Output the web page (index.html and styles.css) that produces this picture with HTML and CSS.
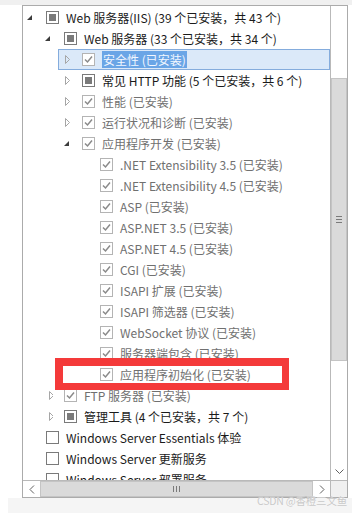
FILE: index.html
```html
<!DOCTYPE html>
<html>
<head>
<meta charset="utf-8">
<title>角色服务</title>
<link rel="stylesheet" href="styles.css">
</head>
<body>
<div class="topstrip"></div>
<div class="wrap">
  <div class="frame">
    <div class="tree">
      <div class="row l0"><span class="tw"><svg width="10" height="10"><polygon class="exp" points="7,2 7,7 2,7"/></svg></span><span class="cb"><svg width="13" height="13"><rect class="box" x="0.5" y="0.5" width="12" height="12"/><rect class="fill" x="3" y="3" width="7" height="7"/></svg></span><span class="tx">Web 服务器(IIS) (39 个已安装，共 43 个)</span></div>
      <div class="row l1"><span class="tw"><svg width="10" height="10"><polygon class="exp" points="7,2 7,7 2,7"/></svg></span><span class="cb"><svg width="13" height="13"><rect class="box" x="0.5" y="0.5" width="12" height="12"/><rect class="fill" x="3" y="3" width="7" height="7"/></svg></span><span class="tx">Web 服务器 (33 个已安装，共 34 个)</span></div>
      <div class="row l2 sel"><span class="tw"><svg width="10" height="10"><polygon class="col" points="4.5,0.5 8.5,4.5 4.5,8.5"/></svg></span><span class="cb off"><svg width="13" height="13"><rect class="box" x="0.5" y="0.5" width="12" height="12"/><path class="tick" d="M3 6.5 L5.5 9 L10 3.5"/></svg></span><span class="tx"><span class="hl">安全性 (已安装)</span></span></div>
      <div class="row l2"><span class="tw"><svg width="10" height="10"><polygon class="col" points="4.5,0.5 8.5,4.5 4.5,8.5"/></svg></span><span class="cb"><svg width="13" height="13"><rect class="box" x="0.5" y="0.5" width="12" height="12"/><rect class="fill" x="3" y="3" width="7" height="7"/></svg></span><span class="tx">常见 HTTP 功能 (5 个已安装，共 6 个)</span></div>
      <div class="row l2 dim"><span class="tw"><svg width="10" height="10"><polygon class="col" points="4.5,0.5 8.5,4.5 4.5,8.5"/></svg></span><span class="cb off"><svg width="13" height="13"><rect class="box" x="0.5" y="0.5" width="12" height="12"/><path class="tick" d="M3 6.5 L5.5 9 L10 3.5"/></svg></span><span class="tx">性能 (已安装)</span></div>
      <div class="row l2 dim"><span class="tw"><svg width="10" height="10"><polygon class="col" points="4.5,0.5 8.5,4.5 4.5,8.5"/></svg></span><span class="cb off"><svg width="13" height="13"><rect class="box" x="0.5" y="0.5" width="12" height="12"/><path class="tick" d="M3 6.5 L5.5 9 L10 3.5"/></svg></span><span class="tx">运行状况和诊断 (已安装)</span></div>
      <div class="row l2 dim"><span class="tw"><svg width="10" height="10"><polygon class="exp" points="8,2 8,7 3,7"/></svg></span><span class="cb off"><svg width="13" height="13"><rect class="box" x="0.5" y="0.5" width="12" height="12"/><path class="tick" d="M3 6.5 L5.5 9 L10 3.5"/></svg></span><span class="tx">应用程序开发 (已安装)</span></div>
      <div class="row l3 dim"><span class="tw"></span><span class="cb off"><svg width="13" height="13"><rect class="box" x="0.5" y="0.5" width="12" height="12"/><path class="tick" d="M3 6.5 L5.5 9 L10 3.5"/></svg></span><span class="tx">.NET Extensibility 3.5 (已安装)</span></div>
      <div class="row l3 dim"><span class="tw"></span><span class="cb off"><svg width="13" height="13"><rect class="box" x="0.5" y="0.5" width="12" height="12"/><path class="tick" d="M3 6.5 L5.5 9 L10 3.5"/></svg></span><span class="tx">.NET Extensibility 4.5 (已安装)</span></div>
      <div class="row l3 dim"><span class="tw"></span><span class="cb off"><svg width="13" height="13"><rect class="box" x="0.5" y="0.5" width="12" height="12"/><path class="tick" d="M3 6.5 L5.5 9 L10 3.5"/></svg></span><span class="tx">ASP (已安装)</span></div>
      <div class="row l3 dim"><span class="tw"></span><span class="cb off"><svg width="13" height="13"><rect class="box" x="0.5" y="0.5" width="12" height="12"/><path class="tick" d="M3 6.5 L5.5 9 L10 3.5"/></svg></span><span class="tx">ASP.NET 3.5 (已安装)</span></div>
      <div class="row l3 dim"><span class="tw"></span><span class="cb off"><svg width="13" height="13"><rect class="box" x="0.5" y="0.5" width="12" height="12"/><path class="tick" d="M3 6.5 L5.5 9 L10 3.5"/></svg></span><span class="tx">ASP.NET 4.5 (已安装)</span></div>
      <div class="row l3 dim"><span class="tw"></span><span class="cb off"><svg width="13" height="13"><rect class="box" x="0.5" y="0.5" width="12" height="12"/><path class="tick" d="M3 6.5 L5.5 9 L10 3.5"/></svg></span><span class="tx">CGI (已安装)</span></div>
      <div class="row l3 dim"><span class="tw"></span><span class="cb off"><svg width="13" height="13"><rect class="box" x="0.5" y="0.5" width="12" height="12"/><path class="tick" d="M3 6.5 L5.5 9 L10 3.5"/></svg></span><span class="tx">ISAPI 扩展 (已安装)</span></div>
      <div class="row l3 dim"><span class="tw"></span><span class="cb off"><svg width="13" height="13"><rect class="box" x="0.5" y="0.5" width="12" height="12"/><path class="tick" d="M3 6.5 L5.5 9 L10 3.5"/></svg></span><span class="tx">ISAPI 筛选器 (已安装)</span></div>
      <div class="row l3 dim"><span class="tw"></span><span class="cb off"><svg width="13" height="13"><rect class="box" x="0.5" y="0.5" width="12" height="12"/><path class="tick" d="M3 6.5 L5.5 9 L10 3.5"/></svg></span><span class="tx">WebSocket 协议 (已安装)</span></div>
      <div class="row l3 dim"><span class="tw"></span><span class="cb off"><svg width="13" height="13"><rect class="box" x="0.5" y="0.5" width="12" height="12"/><path class="tick" d="M3 6.5 L5.5 9 L10 3.5"/></svg></span><span class="tx">服务器端包含 (已安装)</span></div>
      <div class="row l3 dim"><span class="tw"></span><span class="cb off"><svg width="13" height="13"><rect class="box" x="0.5" y="0.5" width="12" height="12"/><path class="tick" d="M3 6.5 L5.5 9 L10 3.5"/></svg></span><span class="tx">应用程序初始化 (已安装)</span></div>
      <div class="row l1 dim"><span class="tw"><svg width="10" height="10"><polygon class="col" points="6.5,0.5 10.5,4.5 6.5,8.5"/></svg></span><span class="cb off"><svg width="13" height="13"><rect class="box" x="0.5" y="0.5" width="12" height="12"/><path class="tick" d="M3 6.5 L5.5 9 L10 3.5"/></svg></span><span class="tx">FTP 服务器 (已安装)</span></div>
      <div class="row l1"><span class="tw"><svg width="10" height="10"><polygon class="col" points="6.5,0.5 10.5,4.5 6.5,8.5"/></svg></span><span class="cb"><svg width="13" height="13"><rect class="box" x="0.5" y="0.5" width="12" height="12"/><rect class="fill" x="3" y="3" width="7" height="7"/></svg></span><span class="tx">管理工具 (4 个已安装，共 7 个)</span></div>
      <div class="row l0"><span class="tw"></span><span class="cb"><svg width="13" height="13"><rect class="box" x="0.5" y="0.5" width="12" height="12"/></svg></span><span class="tx">Windows Server Essentials 体验</span></div>
      <div class="row l0"><span class="tw"></span><span class="cb"><svg width="13" height="13"><rect class="box" x="0.5" y="0.5" width="12" height="12"/></svg></span><span class="tx">Windows Server 更新服务</span></div>
      <div class="row l0"><span class="tw"></span><span class="cb"><svg width="13" height="13"><rect class="box" x="0.5" y="0.5" width="12" height="12"/></svg></span><span class="tx">Windows Server 部署服务</span></div>
    </div>
    <div class="vscroll">
      <div class="vtrack">
        <div class="vthumb"><span class="grip-h"></span></div>
      </div>
      <div class="arrow-btn"><svg width="9" height="6"><path d="M0.5 0.5 L4.5 4.5 L8.5 0.5"/></svg></div>
    </div>
    <div class="hscroll">
      <div class="arrow-btn"><svg width="6" height="9"><path d="M5 0.5 L1 4.5 L5 8.5"/></svg></div>
      <div class="hthumb"><span class="grip-v"></span></div>
      <div class="arrow-btn"><svg width="6" height="9"><path d="M1 0.5 L5 4.5 L1 8.5"/></svg></div>
    </div>
    <div class="corner"></div>
  </div>
</div>
<div class="bottomstrip"></div>
<div class="mark"></div>
<div class="watermark">CSDN @香橙三文鱼</div>
</body>
</html>
```
FILE: styles.css
```css
body {
  margin: 0;
  width: 352px;
  height: 513px;
  overflow: hidden;
  background: #fff;
  font-family: "Noto Sans CJK SC", "Noto Sans", sans-serif;
  font-size: 12px;
  position: relative;
}

.topstrip {
  height: 5px;
  background: #f0f0f0;
}

.wrap {
  padding-left: 22px;
}

.frame {
  width: 326px;
  height: 493px;
  box-sizing: border-box;
  border: 1px solid #ababab;
  display: grid;
  grid-template-columns: 1fr 17px;
  grid-template-rows: 1fr 17px;
  background: #fff;
}

.tree {
  overflow: hidden;
  padding-top: 1px;
}

.row {
  height: 21px;
  box-sizing: border-box;
  border: 1px solid transparent;
  display: flex;
  align-items: center;
  white-space: nowrap;
  color: #1a1a1a;
}
.l0 { margin-left: -1px; }
.l1 { margin-left: 17px; }
.l2 { margin-left: 35px; }
.l3 { margin-left: 53px; }

.row.sel {
  border-color: #84acdd;
  background: #dbe9f9;
}
.row.dim {
  color: #707070;
}

.tw {
  width: 23px;
  flex: none;
  display: flex;
  align-items: center;
  padding-left: 2px;
  box-sizing: border-box;
}
.tw svg { display: block; }
.exp { fill: #3c3c3c; }
.col { fill: none; stroke: #a6a6a6; }

.cb {
  width: 13px;
  height: 13px;
  flex: none;
  margin-right: 7px;
}
.cb svg { display: block; }
.box { fill: #fff; stroke: #7a7a7a; }
.fill { fill: #7a7a7a; }
.cb.off .box { stroke: #b4b4b4; }
.tick { fill: none; stroke: #8a8a8a; stroke-width: 1.5; }

.hl {
  background: #6aa5e6;
  color: #f2f7ff;
  padding: 0 1px;
}

.vscroll {
  border-left: 1px solid #b9b9b9;
  display: flex;
  flex-direction: column;
}
.vtrack {
  flex: 1;
  padding-top: 72px;
  padding-bottom: 102px;
  display: flex;
}
.vthumb {
  flex: 1;
  background: #dadada;
  border: 1px solid #c4c4c4;
  display: flex;
  align-items: center;
  justify-content: center;
}
.grip-h {
  width: 6px;
  height: 5px;
  border-top: 1px solid #7a7a7a;
  border-bottom: 1px solid #7a7a7a;
  background: linear-gradient(#7a7a7a, #7a7a7a) center / 6px 1px no-repeat;
}

.arrow-btn {
  display: flex;
  align-items: center;
  justify-content: center;
  height: 17px;
  width: 17px;
  flex: none;
}
.arrow-btn path { fill: none; stroke: #606060; }

.hscroll {
  border-top: 1px solid #b9b9b9;
  display: flex;
  background: #fff;
}
.hthumb {
  flex: 1;
  background: #dadada;
  border: 1px solid #c4c4c4;
  display: flex;
  align-items: center;
  justify-content: center;
}
.grip-v {
  width: 5px;
  height: 6px;
  border-left: 1px solid #7a7a7a;
  border-right: 1px solid #7a7a7a;
  background: linear-gradient(#7a7a7a, #7a7a7a) center / 1px 6px no-repeat;
}

.corner {
  background: #f0f0f0;
  border-top: 1px solid #b9b9b9;
  border-left: 1px solid #b9b9b9;
}

.bottomstrip {
  margin-left: 8px;
  height: 15px;
  background: #f5f5f5;
}

/* annotation box drawn over the tree */
.mark {
  position: absolute;
  left: 55px;
  top: 358px;
  width: 234px;
  height: 32px;
  box-sizing: border-box;
  border: 7px solid #f43a3a;
  border-left-width: 8px;
  border-top-width: 8px;
}

.watermark {
  position: absolute;
  right: 5px;
  top: 493px;
  font-size: 10.5px;
  color: #c9c9c9;
  text-shadow: 0 0 1px #fff;
  letter-spacing: -0.2px;
}
```
